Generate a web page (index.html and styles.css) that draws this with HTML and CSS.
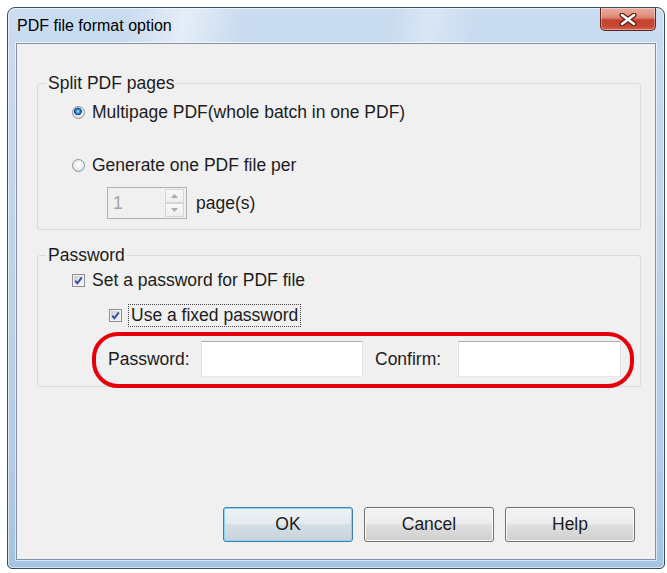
FILE: index.html
```html
<!DOCTYPE html>
<html lang="en">
<head>
<meta charset="utf-8">
<title>PDF file format option</title>
<link rel="stylesheet" href="styles.css">
</head>
<body>
<div class="window">
  <div class="titlebar">
    <span class="title">PDF file format option</span>
    <button class="close" aria-label="Close">
      <svg width="18" height="13" viewBox="0 0 18 13">
        <path d="M3 2 L15 11 M15 2 L3 11" stroke="#5a1d14" stroke-width="5" stroke-linecap="round" fill="none"/>
        <path d="M3 2 L15 11 M15 2 L3 11" stroke="#ffffff" stroke-width="2.6" stroke-linecap="round" fill="none"/>
      </svg>
    </button>
  </div>
  <div class="client">
    <fieldset class="group group-split">
      <legend>Split PDF pages</legend>
      <div class="opt opt-first"><span class="radio checked"></span><span>Multipage PDF(whole batch in one PDF)</span></div>
      <div class="opt opt-second"><span class="radio"></span><span>Generate one PDF file per</span></div>
      <div class="spin-row">
        <div class="spin">
          <span class="spin-val">1</span>
          <div class="spin-btns">
            <span class="sb"><svg width="7" height="4" viewBox="0 0 7 4"><path d="M0 4 L3.5 0 L7 4 Z" fill="#a9adb2"/></svg></span>
            <span class="sb"><svg width="7" height="4" viewBox="0 0 7 4"><path d="M0 0 L3.5 4 L7 0 Z" fill="#a9adb2"/></svg></span>
          </div>
        </div>
        <span>page(s)</span>
      </div>
    </fieldset>
    <fieldset class="group group-pw">
      <legend>Password</legend>
      <div class="opt chk1"><span class="check"><svg width="11" height="11" viewBox="0 0 11 11"><path d="M2.2 5.6 L4.4 8.2 L8.8 2.4" stroke="#2b4aa0" stroke-width="1.8" fill="none"/></svg></span><span>Set a password for PDF file</span></div>
      <div class="opt chk2"><span class="check"><svg width="11" height="11" viewBox="0 0 11 11"><path d="M2.2 5.6 L4.4 8.2 L8.8 2.4" stroke="#2b4aa0" stroke-width="1.8" fill="none"/></svg></span><span class="focus">Use a fixed password</span></div>
      <div class="pw-row">
        <span class="pw-label">Password:</span>
        <span class="input input-a"></span>
        <span class="pw-label confirm">Confirm:</span>
        <span class="input input-b"></span>
      </div>
    </fieldset>
    <div class="buttons">
      <button class="btn default">OK</button>
      <button class="btn">Cancel</button>
      <button class="btn">Help</button>
    </div>
  </div>
</div>
</body>
</html>
```
FILE: styles.css
```css
* { box-sizing: border-box; }
html, body { margin: 0; padding: 0; background: #ffffff; }
body {
  font-family: "Liberation Sans", Arial, sans-serif;
  font-size: 17.5px;
  line-height: 20px;
  color: #1c1c1c;
}
.window {
  margin: 7px 0 0 7px;
  width: 658px;
  height: 562px;
  display: flex;
  flex-direction: column;
  border: 1px solid #3a4d61;
  border-radius: 8px 8px 5px 5px;
  padding: 0 8px 8px;
  background:
    linear-gradient(100deg, rgba(255,255,255,0) 18%, rgba(255,255,255,.5) 27%, rgba(255,255,255,0) 36%, rgba(255,255,255,0) 58%, rgba(255,255,255,.3) 64%, rgba(255,255,255,0) 71%) top left / 100% 36px no-repeat,
    linear-gradient(180deg, #cadcf0 0%, #bed4eb 40%, #b3cce7 80%, #a4c4e2 100%);
  box-shadow: inset 0 0 0 1px rgba(255,255,255,.55);
}
.titlebar {
  flex: none;
  height: 35px;
  display: flex;
  align-items: flex-start;
  justify-content: space-between;
}
.title {
  align-self: center;
  margin-left: 1px;
  font-size: 16px;
  line-height: 20px;
  color: #000;
}
.close {
  width: 56px;
  height: 23px;
  padding: 0;
  border: 1px solid #5e2820;
  border-top: none;
  border-radius: 0 0 5px 5px;
  background: linear-gradient(180deg, #e9ad9e 0%, #dd8a77 42%, #c8412f 56%, #c64a35 85%, #d66a50 100%);
  box-shadow: inset 0 0 0 1px rgba(255,255,255,.35);
  display: flex;
  align-items: center;
  justify-content: center;
}
.client {
  flex: 1;
  display: flex;
  flex-direction: column;
  background: #f0f0f0;
  border: 1px solid #8792a0;
  box-shadow: 0 0 0 1px rgba(255,255,255,.6);
}
.group {
  margin: 0 14px 0 20px;
  padding: 0 0 10px;
  border: 1px solid #d5dade;
  border-radius: 3px;
  min-width: 0;
}
.group legend {
  margin-left: 8px;
  padding: 0 2px;
  line-height: 20px;
}
.group-split { margin-top: 29px; }
.group-pw { margin-top: 15px; padding-bottom: 0; }
.opt {
  display: flex;
  align-items: center;
  gap: 7px;
  height: 22px;
  margin-left: 34px;
}
.opt-first { margin-top: 8px; }
.opt-second { margin-top: 31px; }
.radio {
  flex: none;
  width: 13px;
  height: 13px;
  border-radius: 50%;
  border: 1px solid #8c9196;
  background: radial-gradient(circle at 50% 40%, #ffffff 0%, #eceef0 50%, #cfd3d8 100%);
}
.radio.checked {
  background:
    radial-gradient(circle at 45% 40%, #bfeaff 0px, #3f9be0 1.6px, #1c62aa 3px, #123f73 3.6px, rgba(18,63,115,0) 4.2px),
    radial-gradient(circle at 50% 40%, #ffffff 0%, #eceef0 50%, #cfd3d8 100%);
}
.spin-row {
  display: flex;
  align-items: center;
  gap: 9px;
  margin: 11px 0 0 69px;
}
.spin {
  width: 80px;
  height: 32px;
  border: 1px solid #b0b0b0;
  background: #f0f0f0;
  display: flex;
  align-items: center;
  justify-content: space-between;
  padding: 0 2px 0 5px;
  color: #a3a3a3;
}
.spin-btns {
  display: flex;
  flex-direction: column;
  width: 19px;
  height: 28px;
}
.sb {
  flex: 1;
  border: 1px solid #d3d5d8;
  background: linear-gradient(180deg, #f8f8f8, #eeeeee);
  display: flex;
  align-items: center;
  justify-content: center;
}
.check {
  flex: none;
  width: 13px;
  height: 13px;
  border: 1px solid #8f8f8f;
  background: linear-gradient(135deg, #c3c8cf 0%, #e3e6ea 55%, #f7f8f9 100%);
  box-shadow: inset 0 0 0 1px #f2f2f2;
  display: flex;
  align-items: center;
  justify-content: center;
}
.chk1 { margin-top: 4px; }
.chk2 {
  margin: 13px 0 0 71px;
  height: 23px;
  gap: 6px;
}
.focus {
  height: 23px;
  line-height: 21px;
  padding: 0 2px;
  border: 1px dotted #444;
}
.pw-row {
  display: flex;
  align-items: center;
  width: 542px;
  height: 56px;
  margin: 5px 0 -2px 54px;
  padding: 5px 9px 7px 12px;
  border: 4px solid #e5000c;
  border-radius: 26px;
}
.pw-label { flex: none; width: 93px; }
.pw-label.confirm { width: 83px; margin-left: 12px; }
.input {
  flex: none;
  height: 36px;
  background: #ffffff;
  border: 1px solid;
  border-color: #abadb3 #e2e3ea #e3e9ef #dbdfe6;
}
.input-a { width: 162px; }
.input-b { width: 163px; }
.buttons {
  margin-top: auto;
  display: flex;
  justify-content: flex-end;
  gap: 11px;
  padding: 0 20px 17px 0;
}
.btn {
  width: 130px;
  height: 35px;
  padding: 0;
  font-family: "Liberation Sans", Arial, sans-serif;
  font-size: 17.5px;
  color: #1c1c1c;
  border: 1px solid #707070;
  border-radius: 3px;
  background: linear-gradient(180deg, #f3f3f3 0%, #ececec 48%, #dedede 52%, #d0d0d0 100%);
  box-shadow: inset 0 0 0 1px #fbfbfb;
}
.btn.default {
  border-color: #3c7fb1;
  background: linear-gradient(180deg, #eef3f6 0%, #e3eaef 48%, #d3dde4 52%, #c8d3db 100%);
  box-shadow: inset 0 0 0 1px #8ed3f2;
}
```
